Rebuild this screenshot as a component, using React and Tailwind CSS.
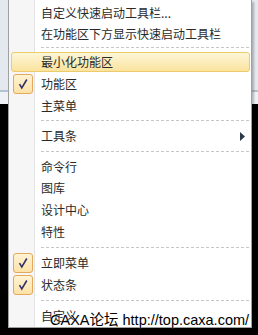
import React from "react";

const font = { fontFamily: '"Microsoft YaHei", "Noto Sans CJK SC", sans-serif' };

const Check = () => (
  <div className="w-[20px] h-[20px] rounded-[3px] border border-[#e2a85c] bg-gradient-to-b from-[#fff3d3] to-[#fde2a6] flex items-center justify-center">
    <svg width="12" height="12" viewBox="0 0 12 12">
      <path d="M2.5 6.2 L4.8 10 L9.8 1.5" fill="none" stroke="#33336b" strokeWidth="1.6" />
    </svg>
  </div>
);

const Item = ({ label, h = "h-[22px]", checked, arrow, hover }) => (
  <div className={`relative flex items-center ${h}`}>
    {hover && (
      <div className="absolute left-[2px] right-[1px] top-[1px] bottom-[1px] rounded-[3px] border border-[#eccb6e] bg-gradient-to-b from-[#fdf6d8] to-[#fbe39c]" />
    )}
    <div className="w-[26px] flex justify-center pl-[2px] relative">{checked && <Check />}</div>
    <span className="relative pl-[6px] text-[12px] text-[#2a2a2a] leading-none">{label}</span>
    {arrow && (
      <svg className="absolute right-[6px]" width="5" height="9" viewBox="0 0 5 9">
        <path d="M0 0 L5 4.5 L0 9 Z" fill="#2d3a4a" />
      </svg>
    )}
  </div>
);

const Sep = ({ h = "h-[9px]" }) => (
  <div className={`flex items-center ${h} pl-[32px] pr-[2px]`}>
    <div className="w-full border-t border-dashed border-[#c6c6c6]" />
  </div>
);

export default function App() {
  return (
    <div className="relative w-[258px] h-[335px] overflow-hidden bg-black" style={font}>
      {/* app behind the menu */}
      <div className="h-[104px] bg-[#e4e9ef] flex flex-col">
        <div className="h-[90px]" />
        <div className="h-[2px] bg-[#b3c1d1]" />
        <div className="flex-1 bg-[#eef1f5]" />
      </div>

      {/* popup menu */}
      <div className="absolute left-[8px] top-0 w-[244px] h-[328px] bg-white border-x border-b border-[#a0a0a0] shadow-[2px_2px_2px_rgba(0,0,0,0.25)]">
        <div className="absolute left-0 top-0 bottom-0 w-[26px] bg-[#f6f6f6] border-r border-[#e3e3e3]" />
        <div className="relative pt-[2px]">
          <Item label="自定义快速启动工具栏..." h="h-[21px]" />
          <Item label="在功能区下方显示快速启动工具栏" h="h-[21px]" />
          <Sep h="h-[7px]" />
          <Item label="最小化功能区" hover />
          <Item label="功能区" checked />
          <Item label="主菜单" h="h-[21px]" />
          <Sep />
          <Item label="工具条" arrow />
          <Sep />
          <Item label="命令行" h="h-[21px]" />
          <Item label="图库" />
          <Item label="设计中心" />
          <Item label="特性" />
          <Sep />
          <Item label="立即菜单" checked />
          <Item label="状态条" checked />
          <Sep />
          <Item label="自定义" />
        </div>
      </div>

      {/* watermark */}
      <div
        className="absolute left-[50px] top-[311px] text-[14.5px] leading-[18px] text-black whitespace-nowrap"
        style={{ fontFamily: '"Liberation Sans", "Noto Sans CJK SC", sans-serif', textShadow: "0 0 1px #fff, 0 0 1px #fff" }}
      >
        CAXA论坛 http://top.caxa.com/
      </div>
    </div>
  );
}
